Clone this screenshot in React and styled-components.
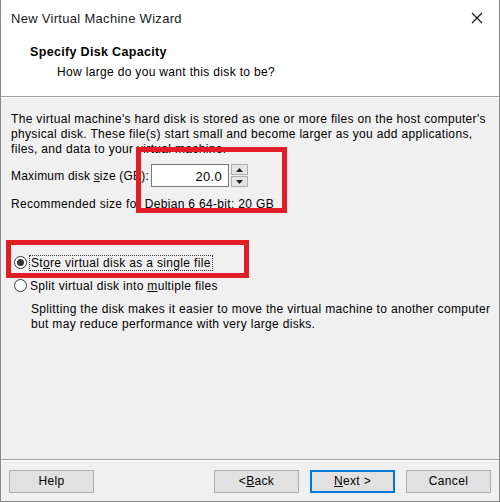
import styled, { createGlobalStyle } from "styled-components"

const GlobalStyle = createGlobalStyle`
    html, body {
        margin: 0;
        padding: 0;
        background: #ffffff;
    }
    body {
        font-family: "Liberation Sans", "DejaVu Sans", sans-serif;
        font-size: 12px;
        letter-spacing: 0.33px;
        color: #000000;
    }
`

export default function App() {
    return (
        <>
            <GlobalStyle />
            <Window>
                <TitleBar>
                    <span>New Virtual Machine Wizard</span>
                    <CloseIcon width='12' height='12' viewBox='0 0 12 12'>
                        <path d='M1 1 L11 11 M11 1 L1 11' stroke='#111' strokeWidth='1.1' />
                    </CloseIcon>
                </TitleBar>
                <Header>
                    <h1>Specify Disk Capacity</h1>
                    <p>How large do you want this disk to be?</p>
                </Header>
                <Divider />
                <Body>
                    <Paragraph>
                        The virtual machine's hard disk is stored as one or more files on the host computer's
                        <br />
                        physical disk. These file(s) start small and become larger as you add applications,
                        <br />
                        files, and data to your virtual machine.
                    </Paragraph>
                    <SizeRow>
                        <label>
                            Maximum disk <u>s</u>ize (GB):
                        </label>
                        <SpinBox>
                            <SpinInput>20.0</SpinInput>
                            <SpinButtons>
                                <SpinButton>
                                    <svg width='7' height='4' viewBox='0 0 7 4'>
                                        <path d='M0 4 L3.5 0 L7 4 Z' fill='#222' />
                                    </svg>
                                </SpinButton>
                                <SpinButton>
                                    <svg width='7' height='4' viewBox='0 0 7 4'>
                                        <path d='M0 0 L3.5 4 L7 0 Z' fill='#222' />
                                    </svg>
                                </SpinButton>
                            </SpinButtons>
                        </SpinBox>
                    </SizeRow>
                    <Recommended>Recommended size for Debian 6 64-bit: 20 GB</Recommended>

                    <Options>
                        <Option>
                            <Radio checked />
                            <Focused>
                                St<u>o</u>re virtual disk as a single file
                            </Focused>
                        </Option>
                        <Option>
                            <Radio />
                            <span>
                                Split virtual disk into <u>m</u>ultiple files
                            </span>
                        </Option>
                        <Hint>
                            Splitting the disk makes it easier to move the virtual machine to another computer
                            <br />
                            but may reduce performance with very large disks.
                        </Hint>
                    </Options>
                </Body>
                <Divider />
                <Footer>
                    <Button>Help</Button>
                    <Spacer />
                    <Button>
                        &lt; <u>B</u>ack
                    </Button>
                    <Button primary>
                        <u>N</u>ext &gt;
                    </Button>
                    <Button>Cancel</Button>
                </Footer>

                <Highlight style={{ left: 135, top: 147, width: 151, height: 66 }} />
                <Highlight style={{ left: 5, top: 240, width: 243, height: 38 }} />
            </Window>
        </>
    )
}

const Window = styled.div`
    position: relative;
    width: 500px;
    height: 502px;
    box-sizing: border-box;
    display: flex;
    flex-direction: column;
    background: #f0f0f0;
    border-left: 1px solid #8a8a8a;
    border-right: 1px solid #8a8a8a;
    border-bottom: 1px solid #8a8a8a;
    overflow: hidden;
`
const TitleBar = styled.div`
    height: 36px;
    display: flex;
    align-items: center;
    justify-content: space-between;
    padding: 0 16px 0 10px;
    background: #ffffff;
    font-size: 13px;
    letter-spacing: 0.3px;
    color: #1a1a1a;
`
const CloseIcon = styled.svg`
    display: block;
`
const Header = styled.div`
    height: 60px;
    box-sizing: border-box;
    background: #ffffff;
    padding: 9px 0 0 29px;
    h1 {
        margin: 0;
        font-size: 12.5px;
        font-weight: bold;
        line-height: 15px;
    }
    p {
        margin: 5px 0 0 27px;
        line-height: 15px;
    }
`
const Divider = styled.div`
    height: 1px;
    background: #a0a0a0;
    border-bottom: 1px solid #ffffff;
`
const Body = styled.div`
    flex: 1;
    padding: 14px 10px 0 10px;
    display: flex;
    flex-direction: column;
    white-space: nowrap;
`
const Paragraph = styled.p`
    margin: 0;
    line-height: 15px;
`
const SizeRow = styled.div`
    display: flex;
    align-items: center;
    gap: 3px;
    margin-top: 7px;
    label {
        width: 137px;
        flex-shrink: 0;
        letter-spacing: 0.2px;
    }
`
const SpinBox = styled.div`
    display: flex;
    align-items: center;
    gap: 2px;
`
const SpinInput = styled.div`
    width: 78px;
    height: 23px;
    box-sizing: border-box;
    border: 1px solid #7a7a7a;
    background: #ffffff;
    text-align: right;
    padding: 4px 6px 0 0;
    font-size: 13px;
`
const SpinButtons = styled.div`
    display: flex;
    flex-direction: column;
    gap: 1px;
`
const SpinButton = styled.div`
    width: 17px;
    height: 11px;
    box-sizing: border-box;
    border: 1px solid #adadad;
    background: #e5e5e5;
    display: flex;
    align-items: center;
    justify-content: center;
`
const Recommended = styled.div`
    margin-top: 10px;
    line-height: 15px;
`
const Options = styled.div`
    margin-top: 39px;
    display: flex;
    flex-direction: column;
`
const Option = styled.div`
    display: flex;
    align-items: center;
    gap: 3px;
    height: 23px;
    padding-left: 3px;
`
const Radio = styled.span`
    width: 13px;
    height: 13px;
    box-sizing: border-box;
    border-radius: 50%;
    border: 1px solid #333333;
    background: #ffffff;
    position: relative;
    &::after {
        content: "";
        display: ${p => (p.checked ? "block" : "none")};
        position: absolute;
        left: 2px;
        top: 2px;
        width: 7px;
        height: 7px;
        border-radius: 50%;
        background: #333333;
    }
`
const Focused = styled.span`
    outline: 1px dotted #333333;
    padding: 0 1px;
`
const Hint = styled.p`
    margin: 5px 0 0 20px;
    line-height: 15px;
`
const Footer = styled.div`
    height: 40px;
    display: flex;
    align-items: center;
    padding: 0 8px 0 8px;
    gap: 11px;
`
const Spacer = styled.div`
    flex: 1;
`
const Button = styled.div`
    width: 85px;
    height: 23px;
    box-sizing: border-box;
    display: flex;
    align-items: center;
    justify-content: center;
    background: #e1e1e1;
    border: ${p => (p.primary ? "2px solid #0078d7" : "1px solid #adadad")};
`
const Highlight = styled.div`
    position: absolute;
    box-sizing: border-box;
    border: 5px solid #e11d26;
    pointer-events: none;
`
